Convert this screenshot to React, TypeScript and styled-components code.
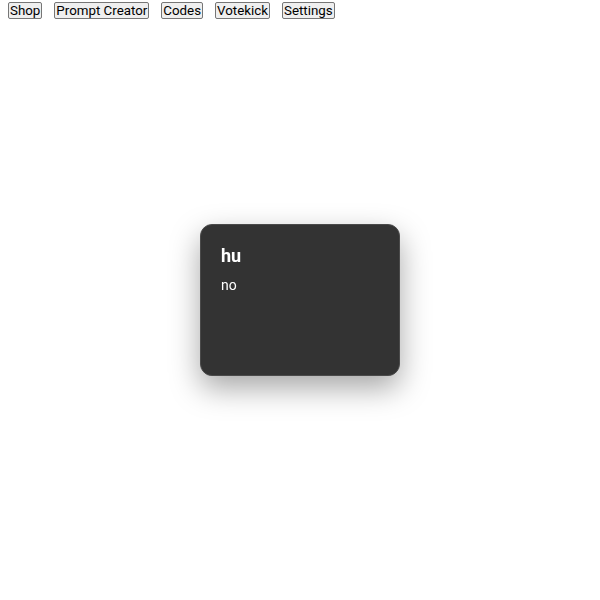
import * as React from "react";
import styled, { createGlobalStyle } from "styled-components";

const GlobalStyle = createGlobalStyle`
  html, body {
    margin: 0;
    padding: 0;
    background: #ffffff;
    font-family: Roboto, "Noto Sans", sans-serif;
  }
`;

const App = () => (
  <>
    <GlobalStyle />
    <NavBar>
      <NavButton>Shop</NavButton>
      <NavButton>Prompt Creator</NavButton>
      <NavButton>Codes</NavButton>
      <NavButton>Votekick</NavButton>
      <NavButton>Settings</NavButton>
    </NavBar>
    <Overlay>
      <Card>
        <CardTitle>hu</CardTitle>
        <CardText>no</CardText>
      </Card>
    </Overlay>
  </>
);

const NavBar = styled.nav`
  display: flex;
  align-items: flex-start;
  gap: 12px;
  padding: 2px 8px 0;
`;

const NavButton = styled.button`
  font-family: Roboto, "Noto Sans", sans-serif;
  font-size: 13.333px;
  line-height: 15px;
  color: #000;
  background: #efefef;
  border: 1px solid #767676;
  border-radius: 2px;
  padding: 0 1px;
  margin: 0;
  cursor: pointer;
`;

const Overlay = styled.div`
  position: fixed;
  inset: 0;
  display: flex;
  align-items: center;
  justify-content: center;
  pointer-events: none;
`;

const Card = styled.div`
  box-sizing: border-box;
  width: 200px;
  height: 152px;
  padding: 18px 20px;
  background: #333333;
  border: 1px solid #4a4a4a;
  border-radius: 12px;
  box-shadow: 0 12px 30px rgba(0, 0, 0, 0.35);
  color: #ffffff;
  pointer-events: auto;
`;

const CardTitle = styled.h2`
  margin: 0 0 6px;
  font-size: 18px;
  font-weight: 700;
  line-height: 26px;
`;

const CardText = styled.p`
  margin: 0;
  font-size: 14px;
  line-height: 20px;
`;

export default App;
